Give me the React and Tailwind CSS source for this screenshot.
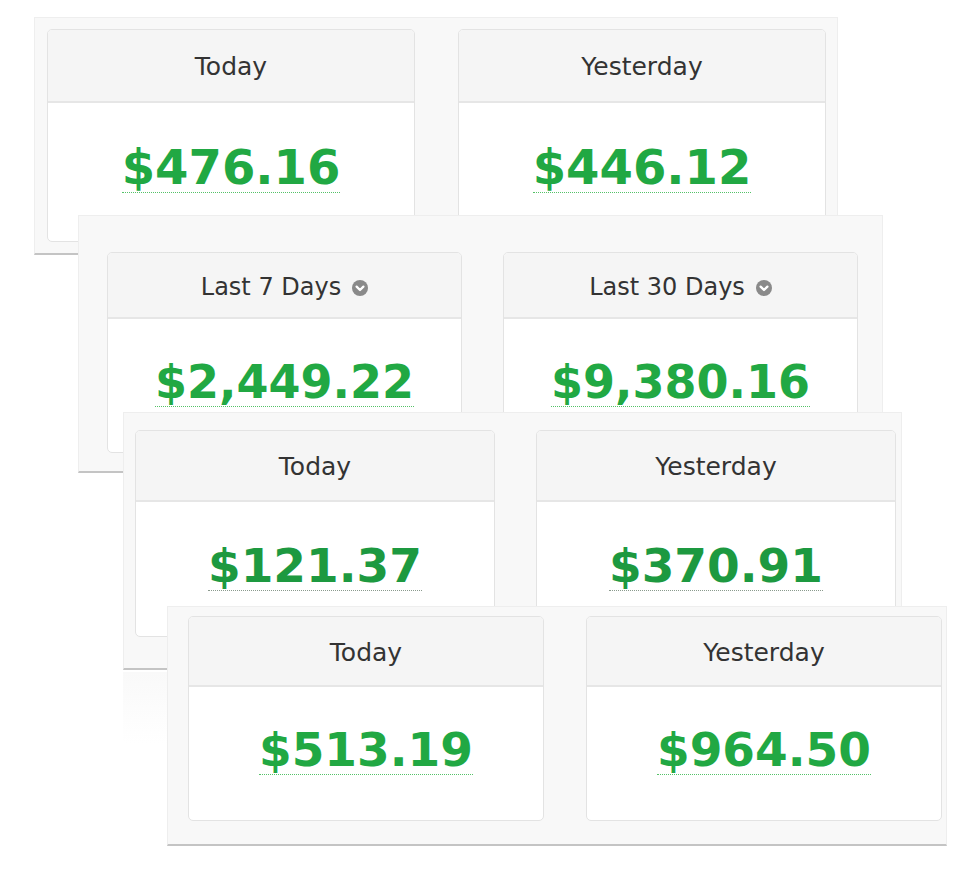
import React from 'react';

const panels = [
  {
    box: 'left-[34px] top-[17px] w-[804px] h-[238px] pl-[12px] pt-[11px] gap-[43px]',
    cardW: 'w-[368px] h-[213px]',
    headH: 'h-[73px]',
    labelSize: 'text-[25px]',
    bodyPad: 'pt-[40px]',
    amountSize: 'text-[48px]',
    green: 'text-[#21a843] border-[#55c268]',
    cards: [
      { label: 'Today', amount: '$476.16' },
      { label: 'Yesterday', amount: '$446.12' },
    ],
  },
  {
    box: 'left-[78px] top-[215px] w-[805px] h-[258px] pl-[28px] pt-[36px] gap-[41px]',
    cardW: 'w-[355px] h-[201px]',
    headH: 'h-[66px]',
    labelSize: 'text-[24px]',
    bodyPad: 'pt-[40px]',
    amountSize: 'text-[46px]',
    green: 'text-[#21a843] border-[#55c268]',
    cards: [
      { label: 'Last 7 Days', amount: '$2,449.22', menu: true },
      { label: 'Last 30 Days', amount: '$9,380.16', menu: true },
    ],
  },
  {
    box: 'left-[123px] top-[412px] w-[779px] h-[258px] pl-[11px] pt-[17px] gap-[41px]',
    cardW: 'w-[360px] h-[207px]',
    headH: 'h-[71px]',
    labelSize: 'text-[25px]',
    bodyPad: 'pt-[40px]',
    amountSize: 'text-[47px]',
    green: 'text-[#1d9940] border-[#8a9a8d]',
    cards: [
      { label: 'Today', amount: '$121.37' },
      { label: 'Yesterday', amount: '$370.91' },
    ],
  },
  {
    box: 'left-[167px] top-[606px] w-[780px] h-[240px] pl-[20px] pt-[9px] gap-[42px]',
    cardW: 'w-[356px] h-[205px]',
    headH: 'h-[70px]',
    labelSize: 'text-[25px]',
    bodyPad: 'pt-[39px]',
    amountSize: 'text-[47px]',
    green: 'text-[#21a843] border-[#55c268]',
    cards: [
      { label: 'Today', amount: '$513.19' },
      { label: 'Yesterday', amount: '$964.50' },
    ],
  },
];

const ChevronCircle = () => (
  <svg width="16" height="16" viewBox="0 0 16 16" className="ml-[11px] mt-[3px]">
    <circle cx="8" cy="8" r="8" fill="#8a8a8a" />
    <path d="M4.6 6.6 L8 10 L11.4 6.6" fill="none" stroke="#fff" strokeWidth="2.3" strokeLinecap="round" strokeLinejoin="round" />
  </svg>
);

const StatCard = ({ panel, card }) => (
  <div className={`${panel.cardW} shrink-0 flex flex-col rounded-[5px] border border-[#e3e3e3] bg-white overflow-hidden`}>
    <div className={`${panel.headH} shrink-0 flex items-center justify-center pt-[3px] bg-[#f5f5f5] border-b-2 border-[#e6e6e6]`}>
      <span className={`${panel.labelSize} text-[#333]`}>{card.label}</span>
      {card.menu && <ChevronCircle />}
    </div>
    <div className={`flex-1 flex justify-center ${panel.bodyPad}`}>
      <span className={`${panel.amountSize} ${panel.green} font-bold leading-none pb-[1px] self-start border-b border-dotted`}>
        {card.amount}
      </span>
    </div>
  </div>
);

export default function App() {
  return (
    <div className="relative w-[980px] h-[876px] bg-white overflow-hidden" style={{ fontFamily: '"DejaVu Sans", Verdana, sans-serif' }}>
      {panels.map((panel, i) => (
        <React.Fragment key={i}>
          <div className={`absolute flex ${panel.box} bg-[#f8f8f8] border border-[#eeeeee] border-b-2 border-b-[#c4c4c4]`}>
            {panel.cards.map((card) => (
              <StatCard key={card.label} panel={panel} card={card} />
            ))}
          </div>
          {i === 2 && (
            <div className="absolute left-[123px] top-[672px] w-[44px] h-[72px] bg-gradient-to-b from-[#f9f9f9] to-white" />
          )}
        </React.Fragment>
      ))}
    </div>
  );
}
